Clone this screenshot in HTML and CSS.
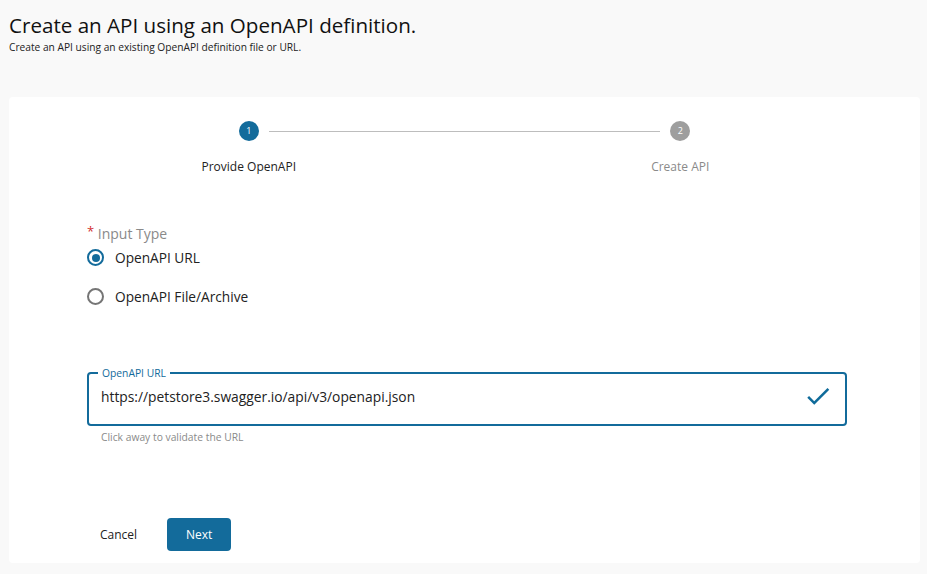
FILE: index.html
```html
<!DOCTYPE html>
<html>
<head>
<meta charset="utf-8">
<link rel="stylesheet" href="styles.css">
</head>
<body>
<div class="page">
  <header class="head">
    <h1 class="title">Create an API using an OpenAPI definition.</h1>
    <p class="subtitle">Create an API using an existing OpenAPI definition file or URL.</p>
  </header>
  <main class="card">
    <div class="stepper">
      <div class="step">
        <div class="step-top">
          <span class="dot active">1</span>
        </div>
        <div class="step-label">Provide OpenAPI</div>
      </div>
      <div class="connector"></div>
      <div class="step">
        <div class="step-top">
          <span class="dot">2</span>
        </div>
        <div class="step-label muted">Create API</div>
      </div>
    </div>

    <div class="form">
      <div class="field-label"><span class="req">*</span> Input Type</div>
      <label class="radio-row">
        <span class="radio checked"></span>
        <span class="radio-text">OpenAPI URL</span>
      </label>
      <label class="radio-row">
        <span class="radio"></span>
        <span class="radio-text">OpenAPI File/Archive</span>
      </label>

      <fieldset class="textfield">
        <legend class="tf-legend">OpenAPI URL</legend>
        <div class="tf-row">
          <span class="tf-value">https://petstore3.swagger.io/api/v3/openapi.json</span>
          <svg class="check" viewBox="0 0 24 24" width="30" height="30"><path d="M9 16.17 4.83 12l-1.42 1.41L9 19 21 7l-1.41-1.41z" fill="#0f6b9a"/></svg>
        </div>
      </fieldset>
      <div class="helper">Click away to validate the URL</div>

      <div class="actions">
        <button class="btn-text">Cancel</button>
        <button class="btn-primary">Next</button>
      </div>
    </div>
  </main>
</div>
</body>
</html>
```

FILE: styles.css
```css
* { box-sizing: border-box; }
html, body {
  margin: 0;
  padding: 0;
  background: #f9f9f9;
  font-family: "Open Sans", "Noto Sans", sans-serif;
  color: #1a1a1a;
}
.page {
  padding: 0 7px 0 9px;
  height: 574px;
}
.head {
  padding-top: 11px;
  height: 97px;
}
.title {
  margin: 0;
  font-size: 20.6px;
  font-weight: 400;
  line-height: 28px;
  color: #111;
}
.subtitle {
  margin: 0;
  font-size: 10.2px;
  line-height: 16px;
  color: #222;
}
.card {
  background: #fff;
  border-radius: 4px;
  height: 466px;
  padding: 24px 24px 0 24px;
}
.stepper {
  position: relative;
  display: flex;
}
.step {
  flex: 1;
  display: flex;
  flex-direction: column;
  align-items: center;
}
.step-top {
  height: 20px;
  display: flex;
  align-items: center;
}
.connector {
  position: absolute;
  left: calc(25% + 20px);
  right: calc(25% + 20px);
  top: 10px;
  border-top: 1px solid #bdbdbd;
}
.dot {
  width: 20px;
  height: 20px;
  border-radius: 50%;
  background: #9e9e9e;
  color: #fff;
  font-size: 9px;
  line-height: 20px;
  text-align: center;
}
.dot.active { background: #136b9b; }
.step-label {
  margin-top: 18px;
  font-size: 12px;
  line-height: 16px;
  color: #222;
}
.step-label.muted { color: #8a8a8a; }

.form {
  margin-left: 54px;
  width: 760px;
  padding-top: 46px;
}
.field-label {
  font-size: 14px;
  line-height: 20px;
  color: #8a8a8a;
}
.req { color: #d32f2f; font-size: 13px; vertical-align: 3px; }
.radio-row {
  display: flex;
  align-items: center;
  height: 39px;
  margin-top: -6px;
  margin-bottom: 6px;
}
.radio-row + .radio-row { margin-top: -6px; }
.radio {
  width: 17px;
  height: 17px;
  border: 2px solid #757575;
  border-radius: 50%;
  margin-right: 11px;
  position: relative;
  flex: none;
}
.radio.checked { border-color: #136b9b; }
.radio.checked::after {
  content: "";
  position: absolute;
  left: 2.5px;
  top: 2.5px;
  width: 8px;
  height: 8px;
  border-radius: 50%;
  background: #136b9b;
}
.radio-text {
  font-size: 13.7px;
  color: #222;
}
.textfield {
  margin: 51px 0 0 0;
  padding: 0 12px 0 12px;
  border: 2px solid #136b9b;
  border-radius: 4px;
  height: 59px;
  min-width: 0;
}
.tf-legend {
  padding: 0 4px;
  margin-left: -3px;
  font-size: 10.3px;
  line-height: 12px;
  color: #136b9b;
}
.tf-row {
  display: flex;
  align-items: center;
  justify-content: space-between;
  height: 42px;
  margin-top: -4px;
}
.tf-value {
  font-size: 13.8px;
  color: #222;
}
.check { margin-right: 0; }
.helper {
  margin: 4px 0 0 14px;
  font-size: 10.3px;
  line-height: 14px;
  color: #8a8a8a;
}
.actions {
  display: flex;
  align-items: center;
  gap: 20px;
  margin-top: 74px;
  margin-left: 3px;
}
.btn-text {
  border: 0;
  background: none;
  font-family: inherit;
  font-size: 12px;
  color: #222;
  padding: 8px 10px;
}
.btn-primary {
  border: 0;
  background: #136b9b;
  color: #fff;
  font-family: inherit;
  font-size: 12px;
  width: 64px;
  height: 33px;
  border-radius: 4px;
}
```
